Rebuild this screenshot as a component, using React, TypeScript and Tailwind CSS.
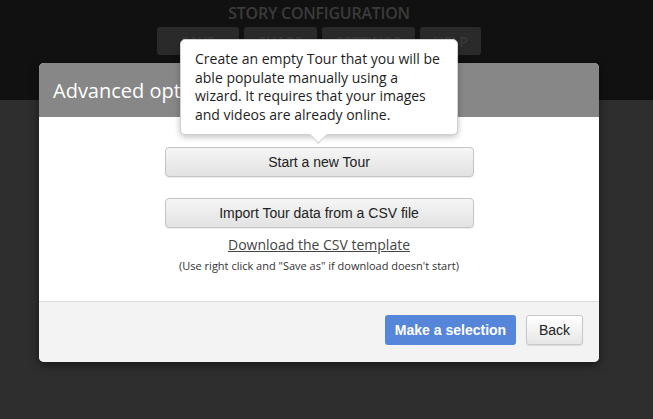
const navItems = [
  { label: "SAVE", w: "w-[82px]" },
  { label: "SHARE", w: "w-[73px]" },
  { label: "SETTINGS", w: "w-[93px]" },
  { label: "HELP", w: "w-[61px]" },
];

const btnGray =
  "w-[309px] h-[30px] rounded-[4px] border border-[#c4c4c4] bg-gradient-to-b from-[#f6f6f6] to-[#e2e2e2] text-[14px] text-[#222] font-['Liberation_Sans',Arial,sans-serif] shadow-[0_1px_1px_rgba(0,0,0,0.08)]";

const App = () => {
  return (
    <div className="relative w-[653px] h-[419px] overflow-hidden bg-[#2e2e2e] font-['Open_Sans',sans-serif]">
      {/* page behind the dialog */}
      <div className="h-[100px] bg-[#111] flex flex-col items-center pt-[3px] pr-[15px]">
        <div className="text-[16px] font-semibold text-[#3b3b3b] tracking-[-0.25px] leading-[21px]">STORY CONFIGURATION</div>
        <div className="flex gap-[5px] mt-[3px]">
          {navItems.map((item) => (
            <div
              key={item.label}
              className={item.w + " h-[28px] rounded-[3px] bg-[#2a2a2a] text-[#3a3a3a] text-[14px] font-semibold flex items-center justify-center leading-none pt-[2px]"}
            >
              {item.label}
            </div>
          ))}
        </div>
      </div>

      {/* dialog */}
      <div className="absolute left-[39px] top-[63px] w-[560px] rounded-[5px] overflow-hidden bg-white shadow-[0_3px_10px_rgba(0,0,0,0.5)]">
        <div className="h-[54px] bg-[#878787] flex items-center px-[14px]">
          <h2 className="text-white text-[20px] leading-none pt-[2px]">Advanced options</h2>
        </div>
        <div className="h-[184px] flex flex-col items-center pt-[30px]">
          <button className={btnGray}>Start a new Tour</button>
          <button className={btnGray + " mt-[21px]"}>Import Tour data from a CSV file</button>
          <a className="mt-[6px] text-[14px] text-[#444] underline leading-[22px]">Download the CSV template</a>
          <p className="mt-[2px] text-[11px] text-[#333] leading-[16px]">(Use right click and "Save as" if download doesn't start)</p>
        </div>
        <div className="h-[61px] bg-[#f3f3f3] border-t border-[#dcdcdc] flex justify-end items-start pt-[13px] pr-[16px] gap-[10px]">
          <button className="w-[131px] h-[30px] rounded-[3px] bg-[#5686da] text-white text-[14px] font-bold font-['Liberation_Sans',Arial,sans-serif]">
            Make a selection
          </button>
          <button className="w-[57px] h-[30px] rounded-[3px] border border-[#c8c8c8] bg-gradient-to-b from-white to-[#e6e6e6] text-[#222] text-[14px] font-['Liberation_Sans',Arial,sans-serif] shadow-[0_1px_1px_rgba(0,0,0,0.1)]">
            Back
          </button>
        </div>
      </div>

      {/* tooltip */}
      <div className="absolute left-[180px] top-[39px] w-[278px] h-[96px] rounded-[5px] bg-white border border-[#d0d0d0] shadow-[0_2px_6px_rgba(0,0,0,0.25)] px-[14px] pt-[10px] text-[14px] leading-[18.5px] text-[#1e1e1e]">
        Create an empty Tour that you will be able populate manually using a wizard. It requires that your images and videos are already online.
        <div className="absolute left-[131px] bottom-[-7px] w-[13px] h-[13px] rotate-45 bg-white border-r border-b border-[#d0d0d0]" />
      </div>
    </div>
  );
};

export default App;
